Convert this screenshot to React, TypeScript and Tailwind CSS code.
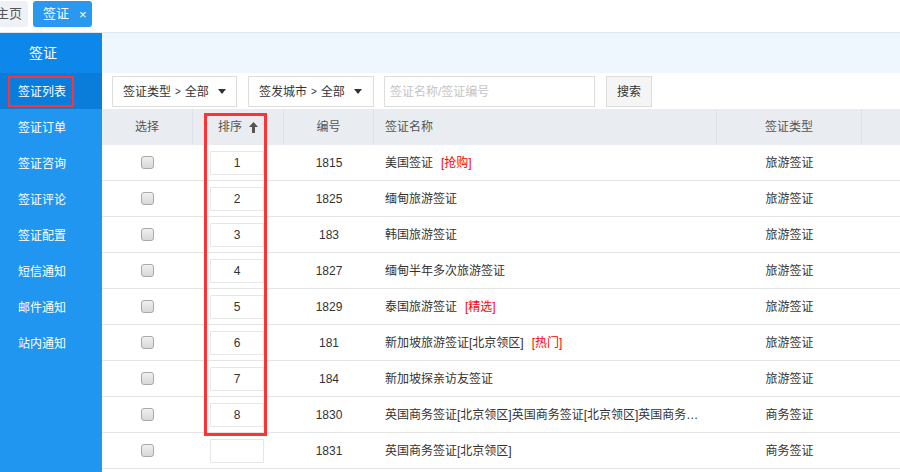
import React from "react";

const rows: { sort: string; id: string; name: string; tag?: string; type: string }[] = [
  { sort: "1", id: "1815", name: "美国签证", tag: "[抢购]", type: "旅游签证" },
  { sort: "2", id: "1825", name: "缅甸旅游签证", type: "旅游签证" },
  { sort: "3", id: "183", name: "韩国旅游签证", type: "旅游签证" },
  { sort: "4", id: "1827", name: "缅甸半年多次旅游签证", type: "旅游签证" },
  { sort: "5", id: "1829", name: "泰国旅游签证", tag: "[精选]", type: "旅游签证" },
  { sort: "6", id: "181", name: "新加坡旅游签证[北京领区]", tag: "[热门]", type: "旅游签证" },
  { sort: "7", id: "184", name: "新加坡探亲访友签证", type: "旅游签证" },
  { sort: "8", id: "1830", name: "英国商务签证[北京领区]英国商务签证[北京领区]英国商务签证[北京领区]", type: "商务签证" },
  { sort: "", id: "1831", name: "英国商务签证[北京领区]", type: "商务签证" },
];

const menu = ["签证订单", "签证咨询", "签证评论", "签证配置", "短信通知", "邮件通知", "站内通知"];

function Caret() {
  return (
    <svg width="8" height="5" viewBox="0 0 8 5" className="ml-[9px]">
      <path d="M0 0h8L4 5z" fill="#333" />
    </svg>
  );
}

function Checkbox() {
  return (
    <span className="inline-block w-[13px] h-[13px] rounded-[3px] border border-[#a9a9a9] bg-gradient-to-b from-[#f0f0f0] to-[#d8d8d8]" />
  );
}

export default function App() {
  return (
    <div
      className="relative w-[900px] h-[472px] overflow-hidden bg-white text-[#333] text-[12px]"
      style={{ fontFamily: '"Liberation Sans", "Noto Sans CJK SC", sans-serif' }}
    >
      {/* top tabs */}
      <div className="h-[33px] border-b border-[#dfe6ef] flex items-start pt-[1px] bg-white">
        <div className="ml-[-10px] w-[38px] h-[26px] bg-[#eef1f6] rounded-[3px] flex items-center justify-center text-[13px] text-[#555]">
          主页
        </div>
        <div className="ml-[5px] w-[59px] h-[26px] bg-[#2b98ef] rounded-[3px] flex items-center text-white text-[13px] pl-[10px]">
          <span>签证</span>
          <span className="ml-[10px] text-[13px] leading-none">×</span>
        </div>
      </div>

      <div className="flex h-[439px]">
        {/* sidebar */}
        <div className="w-[102px] bg-[#2196f0] text-white flex flex-col">
          <div className="h-[40px] bg-[#0d88ea] flex items-center pl-[29px] text-[14px]">签证</div>
          <div className="h-[36px] bg-[#0a7ddb] flex items-center pl-[18px] text-[12px] pt-[1px]">签证列表</div>
          {menu.map((m) => (
            <div key={m} className="h-[36px] flex items-center pl-[18px] text-[12px] pt-[1px]">
              {m}
            </div>
          ))}
        </div>

        {/* main */}
        <div className="flex-1 flex flex-col">
          <div className="h-[40px] bg-[#eef6fe]" />
          <div className="h-[36px] flex items-start pt-[3px] pl-[10px] gap-[11px]">
            <div className="w-[125px] h-[31px] border border-[#ddd] flex items-center pl-[10px] text-[12px] text-[#333]">
              签证类型 <span className="mx-[4px] text-[10px]">&gt;</span> 全部
              <Caret />
            </div>
            <div className="w-[126px] h-[31px] border border-[#ddd] flex items-center pl-[10px] text-[12px] text-[#333]">
              签发城市 <span className="mx-[4px] text-[10px]">&gt;</span> 全部
              <Caret />
            </div>
            <div className="ml-[-1px] w-[211px] h-[31px] border border-[#ddd] flex items-center pl-[5px] text-[12px] text-[#c4c4c4]">
              签证名称/签证编号
            </div>
            <div className="w-[46px] h-[31px] border border-[#ddd] bg-[#f5f5f5] flex items-center justify-center text-[12px] text-[#333]">
              搜索
            </div>
          </div>

          {/* table */}
          <div className="flex flex-col">
            <div className="grid grid-cols-[91px_91px_90px_343px_145px_1fr] h-[36px] bg-[#e9edf2] text-[#555] text-[12px]">
              <div className="border-r border-[#dde2e8] flex items-center justify-center">选择</div>
              <div className="border-r border-[#dde2e8] flex items-center justify-center">
                排序
                <svg width="9" height="11" viewBox="0 0 9 11" className="ml-[7px]">
                  <path d="M4.5 0L9 5H6v6H3V5H0z" fill="#555" />
                </svg>
              </div>
              <div className="border-r border-[#dde2e8] flex items-center justify-center">编号</div>
              <div className="border-r border-[#dde2e8] flex items-center pl-[11px]">签证名称</div>
              <div className="border-r border-[#dde2e8] flex items-center justify-center">签证类型</div>
              <div />
            </div>
            {rows.map((r, i) => (
              <div
                key={i}
                className="grid grid-cols-[91px_91px_90px_343px_145px_1fr] h-[36px] border-b border-[#e4e4e4] text-[12px] text-[#333]"
              >
                <div className="flex items-center justify-center">
                  <Checkbox />
                </div>
                <div className="flex items-center justify-center pr-[3px]">
                  <div className="w-[54px] h-[24px] border border-[#e6e6e6] flex items-center justify-center text-[12px]">
                    {r.sort}
                  </div>
                </div>
                <div className="flex items-center justify-center">{r.id}</div>
                <div className="flex items-center pl-[11px] pr-[14px] min-w-0">
                  <span className="truncate">{r.name}</span>
                  {r.tag && <span className="ml-[8px] text-[#f00] shrink-0">{r.tag}</span>}
                </div>
                <div className="flex items-center justify-center">{r.type}</div>
                <div />
              </div>
            ))}
          </div>
        </div>
      </div>

      {/* red highlight boxes */}
      <div className="absolute left-[8px] top-[76px] w-[66px] h-[31px] border-2 border-[#f33]" />
      <div className="absolute left-[204px] top-[113px] w-[63px] h-[323px] border-[3px] border-[#f33]" />
    </div>
  );
}
